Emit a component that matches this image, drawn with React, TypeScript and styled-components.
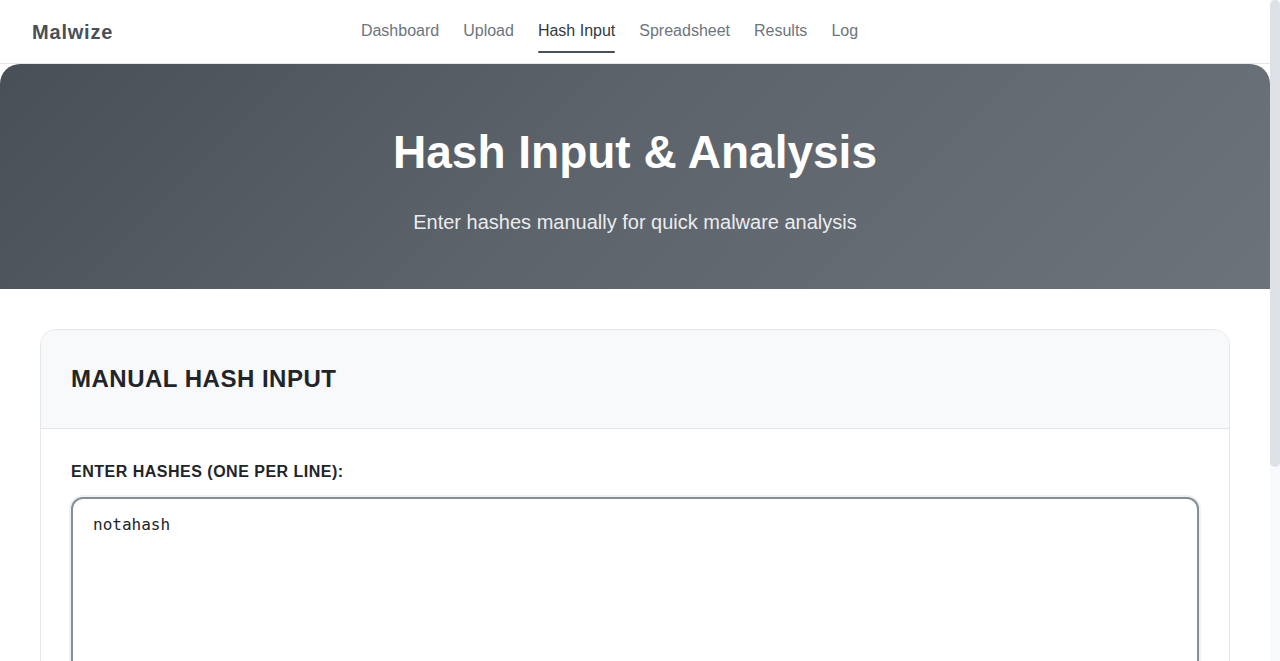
import * as React from 'react';
import styled, { createGlobalStyle } from 'styled-components';

const GlobalStyle = createGlobalStyle`
    html, body {
        margin: 0;
        padding: 0;
        background: #ffffff;
        font-family: "Liberation Sans", Arial, sans-serif;
        color: #212529;
    }

    * {
        box-sizing: border-box;
    }
`;

const links = ['Dashboard', 'Upload', 'Hash Input', 'Spreadsheet', 'Results', 'Log'];

export default function App(): React.ReactNode {
    const [hashes, setHashes] = React.useState('notahash');

    return (
        <Page>
            <GlobalStyle />
            <Content>
                <NavBar>
                    <Brand>Malwize</Brand>
                    <NavLinks>
                        {links.map((link) => (
                            <NavLink key={link} $active={link === 'Hash Input'}>
                                {link}
                            </NavLink>
                        ))}
                    </NavLinks>
                    <NavSpacer />
                </NavBar>

                <Hero>
                    <HeroTitle>Hash Input &amp; Analysis</HeroTitle>
                    <HeroSubtitle>Enter hashes manually for quick malware analysis</HeroSubtitle>
                </Hero>

                <Main>
                    <Card>
                        <CardHeader>
                            <CardTitle>Manual Hash Input</CardTitle>
                        </CardHeader>
                        <CardBody>
                            <FieldLabel htmlFor="hashes">Enter hashes (one per line):</FieldLabel>
                            <HashArea
                                id="hashes"
                                autoFocus
                                spellCheck={false}
                                value={hashes}
                                onChange={(e) => setHashes(e.target.value)}
                            />
                            <Actions>
                                <PrimaryButton>Analyze Hashes</PrimaryButton>
                                <SecondaryButton onClick={() => setHashes('')}>Clear</SecondaryButton>
                            </Actions>
                        </CardBody>
                    </Card>
                </Main>
            </Content>

            {/* slim page scrollbar as in the design */}
            <ScrollRail>
                <ScrollThumb />
            </ScrollRail>
        </Page>
    );
}

const Page = styled.div`
    display: flex;
    align-items: flex-start;
`;

const Content = styled.div`
    flex: 1;
    min-width: 0;
`;

const ScrollRail = styled.div`
    position: sticky;
    top: 0;
    width: 10px;
    height: 100vh;
    flex-shrink: 0;
    background: #f8f9fa;
`;

const ScrollThumb = styled.div`
    height: 467px;
    border-radius: 5px;
    background: #dee2e6;
`;

const NavBar = styled.nav`
    height: 64px;
    display: flex;
    align-items: center;
    justify-content: space-between;
    padding: 0 32px;
    border-bottom: 1px solid #e3e6ea;
    background: #ffffff;
`;

const Brand = styled.div`
    width: 200px;
    font-size: 20px;
    font-weight: 700;
    color: #495057;
    letter-spacing: 0.8px;
    padding-top: 1px;
`;

const NavLinks = styled.div`
    display: flex;
    gap: 24px;
    height: 100%;
    margin-right: 51px;
`;

const NavLink = styled.a<{ $active?: boolean }>`
    position: relative;
    display: flex;
    align-items: center;
    padding-bottom: 2px;
    font-size: 16px;
    color: ${(p) => (p.$active ? '#343a40' : '#6c757d')};
    cursor: pointer;

    &::after {
        content: '';
        position: absolute;
        left: 0;
        right: 0;
        bottom: 10px;
        height: 2px;
        border-radius: 1px;
        background: ${(p) => (p.$active ? '#495057' : 'transparent')};
    }
`;

const NavSpacer = styled.div`
    width: 200px;
`;

const Hero = styled.header`
    height: 225px;
    display: flex;
    flex-direction: column;
    align-items: center;
    border-radius: 20px 20px 0 0;
    background: linear-gradient(135deg, #484f57 0%, #5c636b 45%, #6c737b 100%);
    color: #ffffff;
    text-align: center;
`;

const HeroTitle = styled.h1`
    margin: 60px 0 0;
    font-size: 46px;
    font-weight: 700;
    line-height: 56px;
`;

const HeroSubtitle = styled.p`
    margin: 30px 0 0;
    font-size: 20px;
    line-height: 24px;
    color: rgba(255, 255, 255, 0.9);
`;

const Main = styled.main`
    padding: 40px 40px 60px;
`;

const Card = styled.section`
    border: 1px solid #e3e6ea;
    border-radius: 16px;
    overflow: hidden;
    background: #ffffff;
`;

const CardHeader = styled.div`
    height: 99px;
    display: flex;
    align-items: center;
    padding: 0 30px;
    background: #f8f9fa;
    border-bottom: 1px solid #e3e6ea;
`;

const CardTitle = styled.h2`
    margin: 0;
    font-size: 24px;
    font-weight: 700;
    text-transform: uppercase;
    letter-spacing: 0.5px;
    color: #212529;
`;

const CardBody = styled.div`
    padding: 34px 30px 30px;
    display: flex;
    flex-direction: column;
`;

const FieldLabel = styled.label`
    font-size: 16px;
    font-weight: 700;
    text-transform: uppercase;
    letter-spacing: 0.5px;
    color: #212529;
    margin-bottom: 16px;
`;

const HashArea = styled.textarea`
    width: 100%;
    height: 240px;
    padding: 15px 20px;
    border: 2px solid #868e96;
    border-radius: 12px;
    font-family: "DejaVu Sans Mono", "Liberation Mono", monospace;
    font-size: 16px;
    line-height: 22px;
    color: #212529;
    resize: vertical;
    outline: none;
    box-shadow: 0 0 0 2px rgba(134, 142, 150, 0.12);
    caret-color: #212529;
`;

const Actions = styled.div`
    display: flex;
    gap: 16px;
    margin-top: 24px;
`;

const PrimaryButton = styled.button`
    padding: 12px 28px;
    border: none;
    border-radius: 10px;
    background: #495057;
    color: #ffffff;
    font-family: inherit;
    font-size: 16px;
    font-weight: 700;
    cursor: pointer;
`;

const SecondaryButton = styled.button`
    padding: 12px 28px;
    border: 1px solid #ced4da;
    border-radius: 10px;
    background: #ffffff;
    color: #495057;
    font-family: inherit;
    font-size: 16px;
    cursor: pointer;
`;
